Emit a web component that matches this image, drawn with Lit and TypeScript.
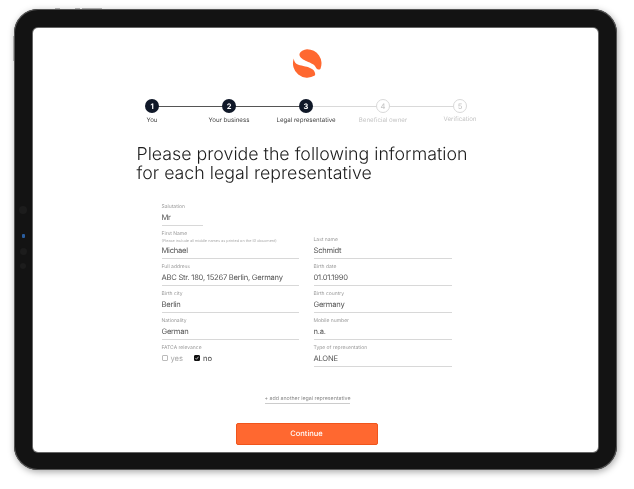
import { LitElement, html, css } from "lit";
import { customElement } from "lit/decorators.js";

const steps = [
  { n: 1, label: "You", done: true },
  { n: 2, label: "Your business", done: true },
  { n: 3, label: "Legal representative", done: true },
  { n: 4, label: "Beneficial owner", done: false },
  { n: 5, label: "Verification", done: false },
];

@customElement("app-root")
export class AppRoot extends LitElement {
  static styles = css`
    :host { display: block; width: 634px; height: 489px; overflow: hidden; background: #fff;
      font-family: Inter, "Liberation Sans", sans-serif; color: #1a1a1a; text-rendering: geometricPrecision; }
    .page { padding: 9px 17px 19px 14px; height: 489px; box-sizing: border-box; }
    .device { position: relative; height: 461px; box-sizing: border-box; padding: 19px 19px 18px 18.5px; background: #131313;
      border-radius: 24px; box-shadow: inset 0 0 0 1px #555, 1px 2px 7px rgba(0,0,0,.35); }
    .btn { position: absolute; background: #aaa; }
    .vol { left: -1.500px; top: 27px; width: 1.500px; height: 25px; }
    .top1 { left: 41px; top: -1px; width: 5px; height: 1px; }
    .top2 { left: 61px; top: -1px; width: 5px; height: 1px; }
    .top3 { left: 68px; top: -1px; width: 20px; height: 1px; }
    .sensors { position: absolute; left: 3px; top: 197px; width: 12px; height: 75px; display: flex; flex-direction: column; align-items: center; }
    .s1 { width: 8px; height: 8px; border-radius: 50%; background: #1c1c1c; }
    .s2 { width: 3px; height: 4px; border-radius: 1px; background: #2a5d9e; margin-top: 20px; }
    .s3 { width: 7px; height: 7px; border-radius: 50%; background: #1c1c1c; margin-top: 10px; }
    .s4 { width: 6px; height: 6px; border-radius: 50%; background: #1c1c1c; margin-top: 8px; }
    .screen { height: 424px; background: #fff; border-radius: 5px; box-shadow: 0 0 0 1px #666; display: flex; flex-direction: column; overflow: hidden; filter: blur(.4px); }
    .logo { display: block; width: 30px; height: 29px; margin: 21px 0 0 259.5px; }
    .steps { display: grid; grid-template-columns: repeat(5, 77px); margin: 21px 0 0 81px; }
    .step { position: relative; display: flex; flex-direction: column; align-items: center; }
    .dot { position: relative; z-index: 1; box-sizing: border-box; width: 14px; height: 14px; border-radius: 50%; display: flex; align-items: center; justify-content: center;
      font-size: 7.5px; font-weight: 700; background: #101828; color: #fff; }
    .todo .dot { background: #fff; border: 1px solid #d9d9d9; color: #c8c8c8; font-weight: 500; }
    .conn { position: absolute; left: 50%; top: 7px; width: 77px; height: 1px; background: #555; }
    .step.next .conn { background: #d9d9d9; }
    .lab { font-size: 6.15px; line-height: 8px; margin-top: 4px; color: #444; white-space: nowrap; }
    .todo .lab { color: #c4c4c4; }
    .todo.last .lab { margin-top: 2.5px; }
    h1 { font-weight: 300; font-size: 17.8px; line-height: 19px; margin: 20px 0 0 104px; color: #1c1c1c; }
    .form { display: grid; grid-template-columns: 137px 138px; column-gap: 15px; row-gap: 5px; margin: 20.5px 0 0 129px; align-items: end; }
    .f { display: flex; flex-direction: column; border-bottom: 1px solid #d8d8d8; padding-bottom: 1px; }
    .f.noline { border-bottom-color: transparent; }
    .f.sal { width: 41px; }
    .l { font-size: 5px; line-height: 7px; color: #999; white-space: nowrap; }
    .n { font-size: 3.8px; line-height: 6px; color: #aaa; white-space: nowrap; }
    .v { font-size: 7.6px; letter-spacing: -.24px; line-height: 13px; color: #555; white-space: nowrap; }
    .checks { display: flex; align-items: center; height: 13px; font-size: 7.6px; color: #444; }
    .box { width: 6px; height: 6px; box-sizing: border-box; border: 1px solid #bbb; margin-right: 3px; border-radius: 1px; }
    .yes { color: #aaa; margin-right: 11px; }
    .box.on { background: #111; border-color: #111; margin-right: 3px; display: flex; }
    .box.on svg { width: 4px; height: 4px; }
    .add { align-self: flex-start; margin: 29px 0 0 232px; font-size: 5.3px; line-height: 7px; color: #888; border-bottom: 1px solid #ccc; white-space: nowrap; }
    .cont { align-self: flex-start; margin: 19px 0 0 203px; width: 142px; height: 22px; box-sizing: border-box; background: #ff6830; border: 1px solid #f0551c; border-radius: 2px; color: #fff;
      font: 500 7.5px Inter, "Liberation Sans", sans-serif; padding: 0; text-rendering: geometricPrecision; }
  `;

  field(label: string, value: string, extra = "") {
    return html`<div class="f ${extra}"><span class="l">${label}</span><span class="v">${value}</span></div>`;
  }

  render() {
    return html`<div class="page"><div class="device">
      <i class="btn vol"></i><i class="btn top1"></i><i class="btn top2"></i><i class="btn top3"></i>
      <div class="sensors"><i class="s1"></i><i class="s2"></i><i class="s3"></i><i class="s4"></i></div>
      <div class="screen">
        <svg class="logo" viewBox="0 0 30 29" aria-label="logo">
          <path fill="#ff6830" d="M7.500 5C8 2.500 12 .3 15 .2A14.300 14.300 0 0 1 28.400 20C27 20.800 25.500 20.800 24.500 19.500C23.500 17.500 22.500 16 21 15.200C19 14 16.500 13 14.700 12.200C11.500 11 7 8.500 7.500 5Z"/>
          <path fill="#ff6830" d="M1.800 9.500C2 12 3 14 4.700 15C7 16 9 16.500 11.300 17C14 17.600 16 18 18 19C20 20 22 21 22.500 22.700C23.200 24 23.500 25.500 22.800 26.500A14.300 14.300 0 0 1 1.800 9.500Z"/>
        </svg>
        <div class="steps">
          ${steps.map((s, i) => html`<div class="step ${s.done ? "" : "todo"} ${i === 2 || !s.done ? "next" : ""} ${i === 4 ? "last" : ""}">
            ${i < 4 ? html`<i class="conn"></i>` : ""}
            <span class="dot">${s.n}</span><span class="lab">${s.label}</span>
          </div>`)}
        </div>
        <h1>Please provide the following information<br />for each legal representative</h1>
        <div class="form">
          ${this.field("Salutation", "Mr", "sal")}<div></div>
          <div class="f"><span class="l">First Name</span><span class="n">(Please include all middle names as printed on the ID document)</span><span class="v">Michael</span></div>
          ${this.field("Last name", "Schmidt")}
          ${this.field("Full address", "ABC Str. 180, 15267 Berlin, Germany")}
          ${this.field("Birth date", "01.01.1990")}
          ${this.field("Birth city", "Berlin")}
          ${this.field("Birth country", "Germany")}
          ${this.field("Nationality", "German")}
          ${this.field("Mobile number", "n.a.")}
          <div class="f noline"><span class="l">FATCA relevance</span>
            <div class="checks"><i class="box"></i><span class="yes">yes</span>
              <i class="box on"><svg viewBox="0 0 8 8"><path d="M1 4.500L3 6.500L7 1.500" fill="none" stroke="#fff" stroke-width="1.500"/></svg></i><span>no</span></div>
          </div>
          ${this.field("Type of representation", "ALONE")}
        </div>
        <span class="add">+ add another legal representative</span>
        <button class="cont">Continue</button>
      </div>
    </div></div>`;
  }
}
